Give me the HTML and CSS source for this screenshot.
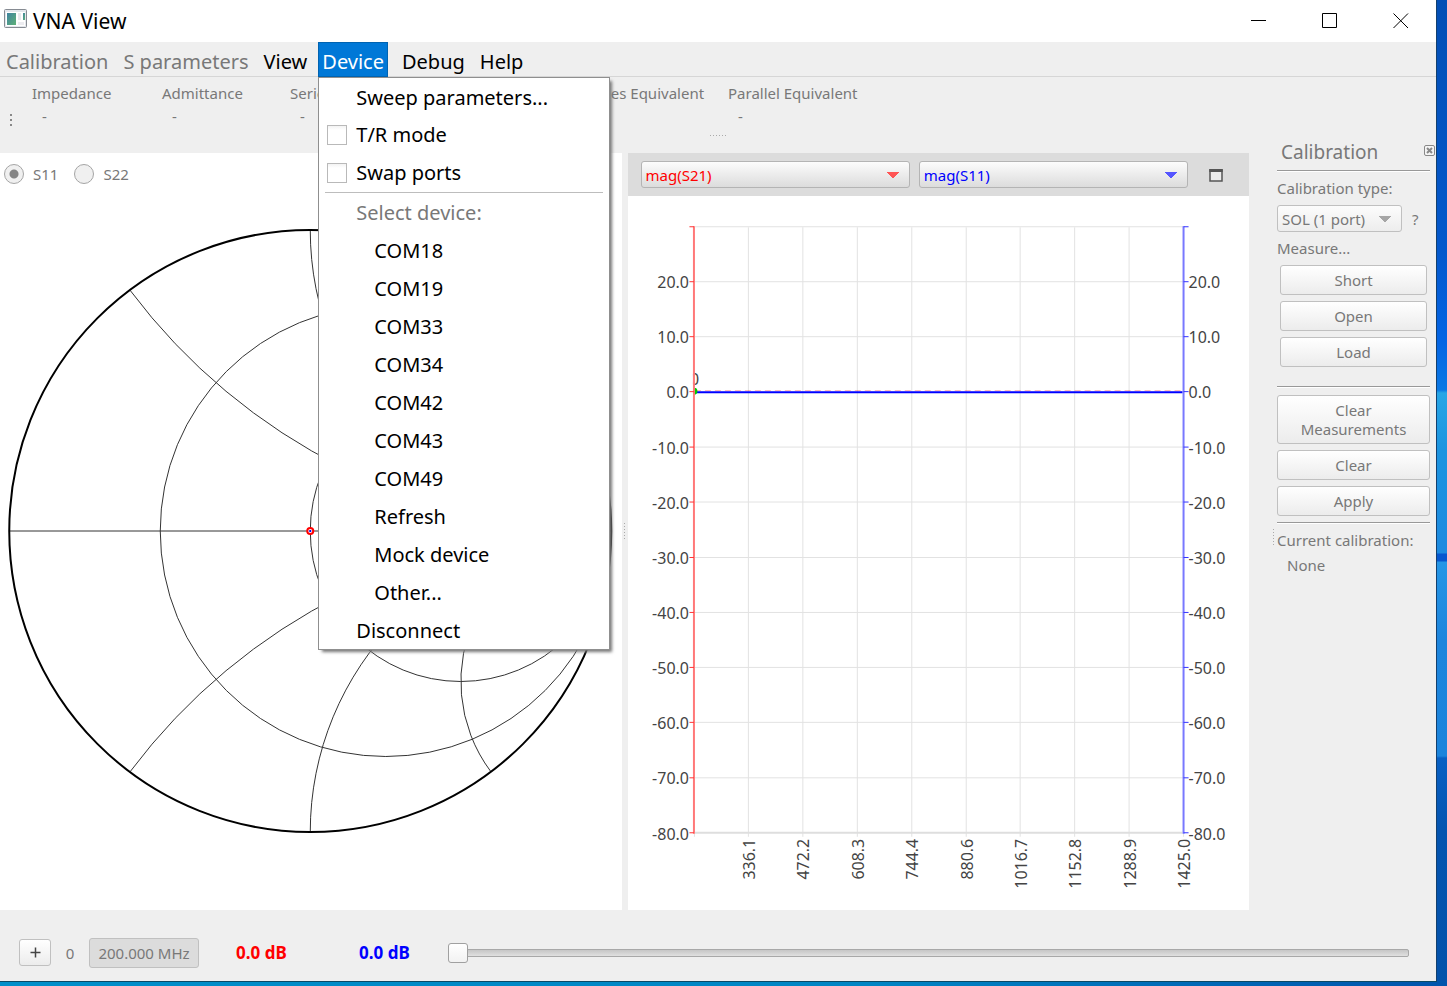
FILE: index.html
```html
<!DOCTYPE html>
<html lang="en">
<head>
<meta charset="utf-8">
<title>VNA View</title>
<link rel="stylesheet" href="styles.css">
</head>
<body>
<div class="window">
  <header class="titlebar">
    <svg class="app-icon" width="23" height="20" viewBox="0 0 23 20" aria-hidden="true">
      <defs><linearGradient id="pane" x1="0" y1="0" x2="1" y2="1"><stop offset="0" stop-color="#3f83a0"/><stop offset="1" stop-color="#5fb177"/></linearGradient></defs>
      <rect x="0.5" y="0.5" width="22" height="18" rx="1" fill="#e4e7ec" stroke="#868b92"/>
      <rect x="2" y="3" width="19" height="14" fill="#fff"/>
      <rect x="3" y="4" width="9" height="12" fill="url(#pane)"/>
      <rect x="14" y="4" width="3" height="7" fill="#e8e8ec"/>
      <rect x="19" y="4" width="2" height="7" fill="url(#pane)"/>
      <rect x="14" y="13" width="6" height="3" fill="#ececf0"/>
    </svg>
    <h1 class="title">VNA View</h1>
    <div class="window-buttons">
      <button class="window-button" aria-label="Minimize"><svg width="16" height="16" viewBox="0 0 16 16"><path d="M0 7.500H15" stroke="#000"/></svg></button>
      <button class="window-button" aria-label="Maximize"><svg width="16" height="16" viewBox="0 0 16 16"><path d="M.5.5h14v14H.5z" stroke="#000" fill="none"/></svg></button>
      <button class="window-button" aria-label="Close"><svg width="16" height="16" viewBox="0 0 16 16"><path d="M.5.5l14.500 14.500M15 .5L.5 15" stroke="#000"/></svg></button>
    </div>
  </header>

  <nav class="menubar">
    <button class="menu-button" disabled>Calibration</button>
    <button class="menu-button" disabled>S parameters</button>
    <button class="menu-button">View</button>
    <div class="menu-anchor">
      <button class="menu-button menu-button-open" aria-expanded="true">Device</button>
      <div class="menu">
        <button class="menu-item">Sweep parameters...</button>
        <label class="menu-item menu-item-check"><input type="checkbox" class="check">T/R mode</label>
        <label class="menu-item menu-item-check"><input type="checkbox" class="check">Swap ports</label>
        <hr class="menu-separator">
        <button class="menu-item" disabled>Select device:</button>
        <button class="menu-item menu-item-nested">COM18</button>
        <button class="menu-item menu-item-nested">COM19</button>
        <button class="menu-item menu-item-nested">COM33</button>
        <button class="menu-item menu-item-nested">COM34</button>
        <button class="menu-item menu-item-nested">COM42</button>
        <button class="menu-item menu-item-nested">COM43</button>
        <button class="menu-item menu-item-nested">COM49</button>
        <button class="menu-item menu-item-nested">Refresh</button>
        <button class="menu-item menu-item-nested">Mock device</button>
        <button class="menu-item menu-item-nested">Other...</button>
        <button class="menu-item">Disconnect</button>
      </div>
    </div>
    <button class="menu-button">Debug</button>
    <button class="menu-button">Help</button>
  </nav>

  <section class="readouts">
    <span class="grip grip-toolbar"></span>
    <dl class="readout-list">
      <div class="readout"><dt>Impedance</dt><dd>-</dd></div>
      <div class="readout"><dt>Admittance</dt><dd>-</dd></div>
      <div class="readout"><dt>Series</dt><dd>-</dd></div>
      <div class="readout"><dt>Series Equivalent</dt><dd>-</dd></div>
      <div class="readout"><dt>Parallel Equivalent</dt><dd>-</dd></div>
    </dl>
  </section>
  <div class="dock-splitter"><span class="grip grip-row"></span></div>

  <main class="workspace">
    <section class="panel smith">
      <div class="smith-ports">
        <label class="port"><input type="radio" name="port" class="radio" checked>S11</label>
        <label class="port"><input type="radio" name="port" class="radio">S22</label>
      </div>
      <svg class="plot" viewBox="0 195 621 715" role="img" aria-label="Smith chart">
        <g fill="none" stroke="#333" stroke-width="1">
          <path d="M9 531H611"/>
          <circle cx="385.500" cy="531" r="225.500"/>
          <circle cx="460.500" cy="531" r="150.500"/>
          <path d="M130 290.500A602 602 0 0 0 611 531A602 602 0 0 0 130 771.500"/>
          <path d="M310 230A301 301 0 0 0 611 531A301 301 0 0 0 310 832"/>
          <path d="M490.500 290.500A150.500 150.500 0 0 0 611 531A150.500 150.500 0 0 0 490.500 771.500"/>
          <circle cx="310" cy="531" r="301" stroke="#000" stroke-width="2"/>
        </g>
        <circle cx="310" cy="531" r="3" fill="#fff" stroke="#f00" stroke-width="2"/>
        <path d="M309 530h2v2h-2z" fill="#00f"/>
      </svg>
    </section>

    <div class="panel-splitter"><span class="grip grip-column"></span></div>

    <section class="panel chart">
      <div class="trace-bar">
        <select class="combo trace-red" aria-label="Left trace"><option>mag(S21)</option></select>
        <select class="combo trace-blue" aria-label="Right trace"><option>mag(S11)</option></select>
        <button class="expand" aria-label="Expand chart"><svg width="14" height="14" viewBox="0 0 14 14"><path d="M1 2h12v11H1z" fill="#ececec" stroke="#555" stroke-width="1.500"/><path d="M0.250 1h13.500v3H.250z" fill="#555"/></svg></button>
      </div>
      <svg class="plot" viewBox="627 196 622 714" role="img" aria-label="Magnitude chart">
        <path fill="none" stroke="#e2e2e2" d="M693 226.500H1183M693 281.500H1183M693 336.500H1183M693 447H1183M693 502H1183M693 557.500H1183M693 612.500H1183M693 667.500H1183M693 722.500H1183M693 778H1183M747.500 227V837M802 227V837M856.500 227V837M911 227V837M965.500 227V837M1019.500 227V837M1074 227V837M1128.500 227V837M693.500 833V837M1183 833V837"/>
        <path fill="none" stroke="#dedede" stroke-width="2" d="M694 833H1182"/>
        <text class="tick" x="689" y="385">0</text>
        <path fill="#fff" d="M685 370h7v18h-7z"/>
        <path fill="none" stroke="#f00" stroke-opacity=".3" d="M694 390.500H1182" stroke-dasharray="6 4"/>
        <path fill="none" stroke="#00f" stroke-width="2" d="M694 392H1182"/>
        <path fill="#0c0" d="M693 387.500a3.500 3.500 0 0 1 0 7z"/>
        <path fill="none" stroke="#ff7878" stroke-width="2" d="M693 226V834"/>
        <path fill="none" stroke="#f33" d="M688.500 226.500H693M688.500 281.500H693M688.500 336.500H693M688.500 391.500H693M688.500 447H693M688.500 502H693M688.500 557.500H693M688.500 612.500H693M688.500 667.500H693M688.500 722.500H693M688.500 778H693M688.500 833H693"/>
        <path fill="none" stroke="#7878ff" stroke-width="2" d="M1183 226V834"/>
        <path fill="none" stroke="#33f" d="M1183 226.500H1188M1183 281.500H1188M1183 336.500H1188M1183 391.500H1188M1183 447H1188M1183 502H1188M1183 557.500H1188M1183 612.500H1188M1183 667.500H1188M1183 722.500H1188M1183 778H1188M1183 833H1188"/>
        <g class="tick tick-left">
          <text x="688" y="288">20.0</text><text x="688" y="343">10.0</text><text x="688" y="398">0.0</text>
          <text x="688" y="454">-10.0</text><text x="688" y="509">-20.0</text><text x="688" y="564">-30.0</text>
          <text x="688" y="619">-40.0</text><text x="688" y="674">-50.0</text><text x="688" y="729">-60.0</text>
          <text x="688" y="784">-70.0</text><text x="688" y="840">-80.0</text>
        </g>
        <g class="tick">
          <text x="1188" y="288">20.0</text><text x="1188" y="343">10.0</text><text x="1188" y="398">0.0</text>
          <text x="1188" y="454">-10.0</text><text x="1188" y="509">-20.0</text><text x="1188" y="564">-30.0</text>
          <text x="1188" y="619">-40.0</text><text x="1188" y="674">-50.0</text><text x="1188" y="729">-60.0</text>
          <text x="1188" y="784">-70.0</text><text x="1188" y="840">-80.0</text>
        </g>
        <g class="tick tick-left">
          <text transform="translate(754 839) rotate(-90)">336.1</text>
          <text transform="translate(808 839) rotate(-90)">472.2</text>
          <text transform="translate(863 839) rotate(-90)">608.3</text>
          <text transform="translate(917 839) rotate(-90)">744.4</text>
          <text transform="translate(972 839) rotate(-90)">880.6</text>
          <text transform="translate(1026 839) rotate(-90)">1016.7</text>
          <text transform="translate(1080 839) rotate(-90)">1152.8</text>
          <text transform="translate(1135 839) rotate(-90)">1288.9</text>
          <text transform="translate(1189 839) rotate(-90)">1425.0</text>
        </g>
      </svg>
    </section>

    <aside class="dock">
      <span class="grip grip-column"></span>
      <div class="dock-body">
        <div class="dock-header">
          <h2 class="dock-title">Calibration</h2>
          <button class="dock-close" aria-label="Close calibration"><svg width="12" height="12" viewBox="0 0 12 12"><rect x=".5" y=".5" width="10" height="10" rx="1.500" fill="#f4f4f4" stroke="#888"/><path d="M3 3l5 5M8 3l-5 5" stroke="#888" stroke-width="2"/></svg></button>
        </div>
        <hr class="rule">
        <label class="field-label" for="cal-type">Calibration type:</label>
        <div class="type-row">
          <select id="cal-type" class="combo combo-light"><option>SOL (1 port)</option></select>
          <button class="help" aria-label="Help">?</button>
        </div>
        <p class="field-label">Measure...</p>
        <div class="button-group button-group-inset">
          <button class="button">Short</button>
          <button class="button">Open</button>
          <button class="button">Load</button>
        </div>
        <hr class="rule rule-spaced">
        <div class="button-group">
          <button class="button button-tall">Clear<br>Measurements</button>
          <button class="button">Clear</button>
          <button class="button">Apply</button>
        </div>
        <hr class="rule rule-tight">
        <p class="current-label">Current calibration:</p>
        <p class="current-value">None</p>
      </div>
    </aside>
  </main>

  <footer class="marker-bar">
    <button class="button add-marker" aria-label="Add marker"><svg width="11" height="11" viewBox="0 0 11 11"><path d="M5.500 0.500v10M.5 5.500h10" stroke="#444" stroke-width="1.500"/></svg></button>
    <label class="marker-index" for="marker">0</label>
    <button class="frequency">200.000 MHz</button>
    <output class="level trace-red">0.0 dB</output>
    <output class="level trace-blue">0.0 dB</output>
    <input id="marker" class="slider" type="range" min="0" max="100" value="0">
  </footer>
</div>
</body>
</html>
```
FILE: styles.css
```css
* { box-sizing: border-box; }

body {
  margin: 0;
  min-height: 100vh;
  display: flex;
  padding: 0 10px 4px 0;
  font: 15px/20px "Noto Sans", sans-serif;
  color: #787878;
  background:
    linear-gradient(90deg, #008fca, #0085c4 60%, #0054ac) bottom / 100% 5px no-repeat,
    linear-gradient(180deg, #034fb5 0, #0358cc 250px, #0464e4 340px, #0a78e4 390px, #27a6e6 393px, #1c94e0 450px, #1d8ae0 553px, #0757cf 554px, #0757cf 561px, #2596e6 562px, #1d85dd 640px, #1b84dc 756px, #0860c4 758px, #0454b0 830px, #0352aa);
}

button, select, input { font: inherit; color: inherit; margin: 0; }
button { background: none; border: 0; padding: 0; }
h1, h2, p, dl, dd { margin: 0; font-weight: normal; }

.window {
  flex: 1;
  display: flex;
  flex-direction: column;
  background: #efefef;
  border-right: 1px solid #12406f;
  border-bottom: 1px solid #0a4a66;
}

/* Title bar */
.titlebar { display: flex; align-items: center; height: 42px; padding-left: 4px; background: #fff; color: #000; }
.app-icon { display: block; margin-bottom: 4px; }
.title { flex: 1; margin-left: 6px; font-size: 21px; line-height: 42px; }
.window-buttons { display: flex; height: 39px; }
.window-button { width: 71px; display: grid; place-items: center; }
.window-button svg { display: block; }

/* Menu bar */
.menubar { display: flex; gap: 7px; height: 35px; padding-left: 2px; border-bottom: 1px solid #d6d6d6; font-size: 20px; color: #000; }
.menu-button { height: 35px; padding: 0 4px; line-height: 35px; white-space: nowrap; padding-top: 2px; }
.menu-button:disabled, .menu-item:disabled { color: #787878; }
.menu-anchor { position: relative; margin-right: 3px; }
.menu-button-open { background: #0078d7; color: #fff; box-shadow: inset 0 0 0 1px #0063b1; }
.menu {
  position: absolute;
  z-index: 2;
  top: 35px;
  left: 0;
  width: 292px;
  display: flex;
  flex-direction: column;
  background: #fff;
  border: 1px solid #8f8f8f;
  box-shadow: 3px 3px 3px -1px #777;
}
.menu-item { height: 38px; padding: 2px 0 0 37px; text-align: left; line-height: 36px; }
.menu-item-check { display: flex; align-items: center; gap: 9px; padding: 0 0 0 8px; }
.menu-item-nested { padding-left: 55px; }
.menu-separator { width: 278px; height: 1px; margin: 0 6px; border: 0; background: #bdbdbd; }
.check { appearance: none; width: 20px; height: 20px; border: 1px solid #b9b9b9; background: linear-gradient(#f3f3f3, #fff 4px); }

/* Readouts */
.readouts { display: flex; height: 56px; padding: 6px 0 0 10px; }
.readout-list { display: grid; grid-template-columns: 130px 128px 294px 144px auto; margin-left: 20px; }
.readout { white-space: nowrap; }
.readout dd { padding-left: 10px; line-height: 26px; }

.grip { display: block; }
.grip-toolbar { width: 2px; height: 14px; margin-top: 31px; background: repeating-linear-gradient(#888 0 2px, transparent 2px 5px); }
.grip-row { width: 17px; height: 1px; background: repeating-linear-gradient(90deg, #aaa 0 1px, transparent 1px 3px); }
.grip-column { width: 1px; height: 17px; background: repeating-linear-gradient(#aaa 0 1px, transparent 1px 3px); }
.dock-splitter { display: grid; place-items: center; height: 5px; }

/* Workspace */
.workspace { flex: 1; display: flex; min-height: 0; }
.panel { flex: 1 1 0; min-width: 0; display: flex; flex-direction: column; margin-top: 15px; background: #fff; }
.panel-splitter { width: 6px; display: grid; place-items: center; margin-top: 15px; }
.plot { display: block; flex: 1 1 0; width: 100%; min-height: 0; }
.smith-ports { display: flex; gap: 16px; height: 42px; padding-left: 4px; align-items: center; }
.port { display: flex; align-items: center; gap: 9px; }
.radio { appearance: none; width: 20px; height: 20px; border: 1px solid #a5a5a5; border-radius: 50%; background: #f0f0f0; }
.radio:checked { background: radial-gradient(circle, #858585 0 4px, #f0f0f0 5px); }

.trace-bar { display: flex; align-items: center; gap: 9px; height: 43px; padding-left: 13px; background: #dcdcdc; }
.trace-bar .combo { flex: 1; }
.trace-red { color: #f00; --arrow: #ff5555; }
.trace-blue { color: #00f; --arrow: #5555ff; }
.combo {
  --face-bottom: #dcdcdc;
  appearance: none;
  height: 27px;
  min-width: 0;
  padding: 0 4px;
  border: 1px solid #b4b4b4;
  border-radius: 3px;
  background:
    linear-gradient(to bottom left, var(--arrow) 50%, transparent 51%) right 16px center / 6px 6px no-repeat,
    linear-gradient(to bottom right, var(--arrow) 50%, transparent 51%) right 10px center / 6px 6px no-repeat,
    linear-gradient(#fcfcfc, var(--face-bottom));
}
.combo-light { --arrow: #a6a6a6; --face-bottom: #ededed; width: 125px; border-color: #c0c0c0; }
.expand { width: 38px; margin-right: 14px; display: grid; place-items: center; }

.tick { font: 16px "Noto Sans", sans-serif; fill: #444; }
.tick-left { text-anchor: end; }

/* Calibration dock */
.dock { flex: 0 0 187px; display: flex; align-items: center; padding: 0 6px 0 24px; }
.dock > .grip { margin-top: 26px; }
.dock-body { flex: 1; align-self: stretch; padding-left: 3px; }
.dock-header { display: flex; height: 32px; padding-left: 4px; margin-right: -6px; }
.dock-title { flex: 1; font-size: 19px; line-height: 29px; }
.dock-close { display: block; height: 26px; }
.dock-close svg { display: block; }
.rule { height: 2px; margin: 0; border: 0; border-top: 1px solid #999; background: #fff; }
.rule-spaced { margin: 19px 0 7px; }
.rule-tight { margin: 6px 0; }
.field-label { display: block; line-height: 33px; }
.type-row { display: flex; align-items: center; gap: 10px; height: 27px; }
.button-group { display: flex; flex-direction: column; gap: 6px; }
.button-group-inset { padding: 0 3px; }
.button { height: 30px; border: 1px solid #c0c0c0; border-radius: 3px; background: linear-gradient(#fff, #ececec); line-height: 19px; }
.button-tall { height: 49px; }
.current-value { padding: 5px 0 0 10px; }

/* Marker bar */
.marker-bar { display: flex; align-items: center; height: 71px; padding: 14px 27px 0 19px; }
.add-marker { width: 32px; height: 27px; display: grid; place-items: center; }
.marker-index { width: 38px; text-align: center; }
.frequency { width: 110px; height: 30px; border: 1px solid #c0c0c0; border-radius: 3px; background: #dcdcdc; }
.level { width: 123px; padding-left: 37px; font-size: 17px; font-weight: bold; }
.slider { flex: 1; appearance: none; height: 20px; margin-left: 3px; background: none; }
.slider::-webkit-slider-runnable-track { height: 8px; border: 1px solid #a8a8a8; border-radius: 2px; background: linear-gradient(#c6c6c6, #e0e0e0); }
.slider::-webkit-slider-thumb { appearance: none; width: 20px; height: 20px; margin: -7px 0 0 -1px; border: 1px solid #a0a0a0; border-radius: 3px; background: linear-gradient(#fff, #f2f2f2); }
```
